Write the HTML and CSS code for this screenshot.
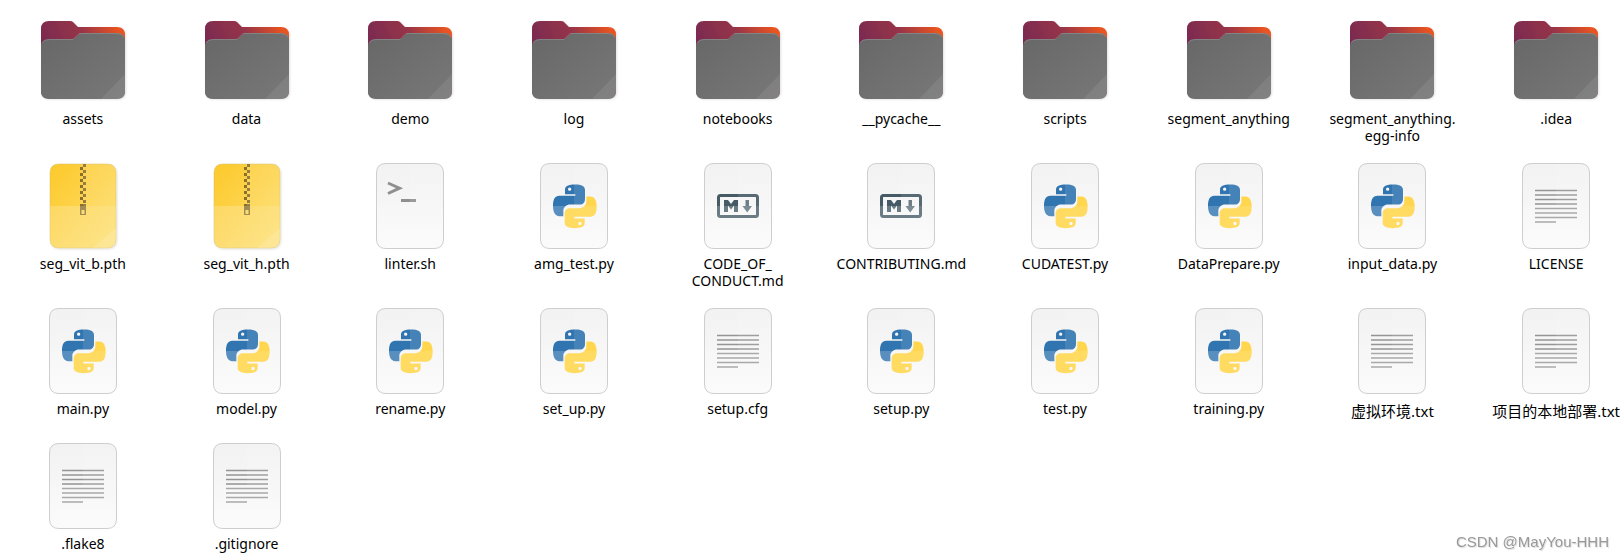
FILE: index.html
```
<!DOCTYPE html>
<html lang="en">

<head>
  <meta charset="utf-8">
  <title>Files</title>
  <link rel="stylesheet" href="styles.css">
</head>

<body>

  <!-- icon definitions -->
  <svg class="defs" aria-hidden="true">
    <defs>
      <linearGradient id="folder-back" x1="0" y1="0.4" x2="1" y2="0">
        <stop offset="0" stop-color="#772953"></stop>
        <stop offset="0.5" stop-color="#963449"></stop>
        <stop offset="0.9" stop-color="#e95420"></stop>
      </linearGradient>
      <linearGradient id="folder-front" x1="0" y1="0" x2="1" y2="1">
        <stop offset="0" stop-color="#676767"></stop>
        <stop offset="1" stop-color="#787878"></stop>
      </linearGradient>
      <linearGradient id="paper" x1="0" y1="0" x2="0" y2="1">
        <stop offset="0" stop-color="#f2f2f2"></stop>
        <stop offset="1" stop-color="#fafafa"></stop>
      </linearGradient>
      <linearGradient id="zip" x1="0" y1="0" x2="1" y2="1">
        <stop offset="0" stop-color="#fdc92b"></stop>
        <stop offset="1" stop-color="#fddf70"></stop>
      </linearGradient>
      <filter id="shadow" x="-10%" y="-10%" width="120%" height="120%">
        <feDropShadow dx="1" dy="1" stdDeviation="1" flood-opacity="0.12"></feDropShadow>
      </filter>
    </defs>

    <symbol id="icon-folder" viewBox="0 0 96 96">
      <path d="M6 34V17Q6 9 14 9H35Q37 9 38 10L43 15H82Q90 15 90 23V79Q90 86.500 82 86.500H14Q6 86.500 6 79Z" fill="url(#folder-back)" filter="url(#shadow)"></path>
      <path d="M6 35Q6 27 14 27H37Q39 27 40 26L43 23Q45 21 47 21H82Q90 21 90 29V79Q90 87 82 87H14Q6 87 6 79Z" fill="url(#folder-front)"></path>
      <path d="M7 31Q9 27.500 14 27.500H38L44 21.500H82Q87 21.500 89 25" fill="none" stroke="#999" stroke-opacity="0.5"></path>
      <path d="M90 62V79Q90 87 82 87H66Z" fill="#fff" opacity="0.08"></path>
    </symbol>

    <symbol id="paper-sheet" viewBox="0 0 96 96">
      <path d="M24 5.500H72Q81.500 5.500 81.500 15V81Q81.500 90.500 72 90.500H24Q14.500 90.500 14.500 81V15Q14.500 5.500 24 5.500Z" fill="url(#paper)" stroke="#cecece"></path>
    </symbol>

    <symbol id="paper-light" viewBox="0 0 96 96">
      <path d="M48 6H72Q81 6 81 15V48H48Z" fill="#fff" opacity="0.1"></path>
      <path d="M15 48H81V81Q81 90 72 90H24Q15 90 15 81Z" fill="#fff" opacity="0.2"></path>
      <path d="M81 70V81Q81 90 72 90H58Z" fill="#fff" opacity="0.12"></path>
    </symbol>

    <symbol id="icon-text" viewBox="0 -1 96 96">
      <use href="#paper-sheet" width="96" height="96"></use>
      <path d="M27 32.500H69M27 37H69M27 41.500H69M27 46H69M27 50.500H69M27 55H69M27 59.500H69M27 64H48" stroke="#949494" stroke-width="1.700"></path>
      <use href="#paper-light" width="96" height="96"></use>
    </symbol>

    <symbol id="icon-shell" viewBox="0 -1 96 96">
      <use href="#paper-sheet" width="96" height="96"></use>
      <path d="M26 25L37.500 30.200L26 35.500" fill="none" stroke="#8f8f8f" stroke-width="3"></path>
      <path d="M39 42.500H54" stroke="#8f8f8f" stroke-width="3"></path>
      <use href="#paper-light" width="96" height="96"></use>
    </symbol>

    <symbol id="icon-markdown" viewBox="0 -1 96 96">
      <use href="#paper-sheet" width="96" height="96"></use>
      <rect x="28.500" y="37.500" width="39" height="21" rx="2" fill="none" stroke="#455a64" stroke-width="3"></rect>
      <path d="M34 54V42H38L41 46L44 42H48V54H44V47.500L41 51.500L38 47.500V54Z" fill="#455a64"></path>
      <path d="M55.500 42H59V48H62L57.200 54.500L52.500 48H55.500Z" fill="#5d707a"></path>
      <use href="#paper-light" width="96" height="96"></use>
    </symbol>

    <symbol id="icon-python" viewBox="0 -1 96 96">
      <use href="#paper-sheet" width="96" height="96"></use>
      <g transform="translate(-6 -8.500) scale(0.3333)">
        <path fill-rule="evenodd" d="M166 105C145 105 135 109 135 121V134H166V139H118C105 139 99 150 99 169C99 188 105 200 118 200H130V184C130 173 140 165 150 165H180C189 165 195 158 195 149V121C195 110 184 105 166 105ZM149 114A5 5 0 1 1 149 124A5 5 0 1 1 149 114Z" fill="#3074b0"></path>
        <path fill-rule="evenodd" transform="rotate(180 164.500 170.500)" d="M166 105C145 105 135 109 135 121V134H166V139H118C105 139 99 150 99 169C99 188 105 200 118 200H130V184C130 173 140 165 150 165H180C189 165 195 158 195 149V121C195 110 184 105 166 105ZM149 114A5 5 0 1 1 149 124A5 5 0 1 1 149 114Z" fill="#ffd23a"></path>
      </g>
      <use href="#paper-light" width="96" height="96"></use>
    </symbol>

    <symbol id="icon-zip" viewBox="0 -1 96 96">
      <path d="M24 6H72Q81 6 81 15V81Q81 90 72 90H24Q15 90 15 81V15Q15 6 24 6Z" fill="url(#zip)" stroke="#d5bd68" stroke-width="0.500" filter="url(#shadow)"></path>
      <path d="M48 6h3v3h-3zM45 9h3v3h-3zM48 12h3v3h-3zM45 15h3v3h-3zM48 18h3v3h-3zM45 21h3v3h-3zM48 24h3v3h-3zM45 27h3v3h-3zM48 30h3v3h-3zM45 33h3v3h-3zM48 36h3v3h-3zM45 39h3v3h-3zM48 42h3v3h-3zM45 46h6v11h-6zM46.500 52v4h3v-4z" fill="#8a702c" fill-rule="evenodd"></path>
      <use href="#paper-light" width="96" height="96"></use>
    </symbol>
  </svg>

  <ul class="files">
    <li class="file"><svg class="icon"><use href="#icon-folder"></use></svg><span class="name">assets</span></li>
    <li class="file"><svg class="icon"><use href="#icon-folder"></use></svg><span class="name">data</span></li>
    <li class="file"><svg class="icon"><use href="#icon-folder"></use></svg><span class="name">demo</span></li>
    <li class="file"><svg class="icon"><use href="#icon-folder"></use></svg><span class="name">log</span></li>
    <li class="file"><svg class="icon"><use href="#icon-folder"></use></svg><span class="name">notebooks</span></li>
    <li class="file"><svg class="icon"><use href="#icon-folder"></use></svg><span class="name">__pycache__</span></li>
    <li class="file"><svg class="icon"><use href="#icon-folder"></use></svg><span class="name">scripts</span></li>
    <li class="file"><svg class="icon"><use href="#icon-folder"></use></svg><span class="name">segment_anything</span></li>
    <li class="file"><svg class="icon"><use href="#icon-folder"></use></svg><span class="name">segment_anything.<wbr>egg-info</span></li>
    <li class="file"><svg class="icon"><use href="#icon-folder"></use></svg><span class="name">.idea</span></li>

    <li class="file"><svg class="icon"><use href="#icon-zip"></use></svg><span class="name">seg_vit_b.pth</span></li>
    <li class="file"><svg class="icon"><use href="#icon-zip"></use></svg><span class="name">seg_vit_h.pth</span></li>
    <li class="file"><svg class="icon"><use href="#icon-shell"></use></svg><span class="name">linter.sh</span></li>
    <li class="file"><svg class="icon"><use href="#icon-python"></use></svg><span class="name">amg_test.py</span></li>
    <li class="file"><svg class="icon"><use href="#icon-markdown"></use></svg><span class="name">CODE_OF_<wbr>CONDUCT.md</span></li>
    <li class="file"><svg class="icon"><use href="#icon-markdown"></use></svg><span class="name">CONTRIBUTING.md</span></li>
    <li class="file"><svg class="icon"><use href="#icon-python"></use></svg><span class="name">CUDATEST.py</span></li>
    <li class="file"><svg class="icon"><use href="#icon-python"></use></svg><span class="name">DataPrepare.py</span></li>
    <li class="file"><svg class="icon"><use href="#icon-python"></use></svg><span class="name">input_data.py</span></li>
    <li class="file"><svg class="icon"><use href="#icon-text"></use></svg><span class="name">LICENSE</span></li>

    <li class="file"><svg class="icon"><use href="#icon-python"></use></svg><span class="name">main.py</span></li>
    <li class="file"><svg class="icon"><use href="#icon-python"></use></svg><span class="name">model.py</span></li>
    <li class="file"><svg class="icon"><use href="#icon-python"></use></svg><span class="name">rename.py</span></li>
    <li class="file"><svg class="icon"><use href="#icon-python"></use></svg><span class="name">set_up.py</span></li>
    <li class="file"><svg class="icon"><use href="#icon-text"></use></svg><span class="name">setup.cfg</span></li>
    <li class="file"><svg class="icon"><use href="#icon-python"></use></svg><span class="name">setup.py</span></li>
    <li class="file"><svg class="icon"><use href="#icon-python"></use></svg><span class="name">test.py</span></li>
    <li class="file"><svg class="icon"><use href="#icon-python"></use></svg><span class="name">training.py</span></li>
    <li class="file"><svg class="icon"><use href="#icon-text"></use></svg><span class="name cjk" lang="zh">虚拟环境.txt</span></li>
    <li class="file"><svg class="icon"><use href="#icon-text"></use></svg><span class="name cjk" lang="zh">项目的本地部署.txt</span></li>

    <li class="file"><svg class="icon"><use href="#icon-text"></use></svg><span class="name">.flake8</span></li>
    <li class="file"><svg class="icon"><use href="#icon-text"></use></svg><span class="name">.gitignore</span></li>
  </ul>

  <p class="watermark">CSDN @MayYou-HHH</p>

</body>

</html>
```
FILE: styles.css
```
* {
  margin: 0;
  padding: 0;
  box-sizing: border-box;
}

body {
  min-height: 100vh;
  background: #fff;
  color: #000;
  font-family: "Noto Sans", "Noto Sans CJK SC", sans-serif;
  font-size: 14px;
  line-height: 17px;
}

.defs {
  position: absolute;
  width: 0;
  height: 0;
}

.files {
  display: grid;
  grid-template-columns: repeat(10, minmax(0, 1fr));
  gap: 13px 32px;
  padding: 12px 2px 4px 17px;
  list-style: none;
}

.file {
  display: flex;
  flex-direction: column;
  align-items: center;
  gap: 2px;
  text-align: center;
}

.icon {
  width: 96px;
  height: 96px;
}

.name.cjk {
  padding: 3px 0 4px;
  font-size: 15px;
  white-space: nowrap;
}

.watermark {
  position: fixed;
  right: 15px;
  bottom: 8px;
  color: #999;
  font-family: "Liberation Sans", Arial, sans-serif;
  font-size: 15px;
  text-shadow: 1px 1px 1px #ddd;
}
```
